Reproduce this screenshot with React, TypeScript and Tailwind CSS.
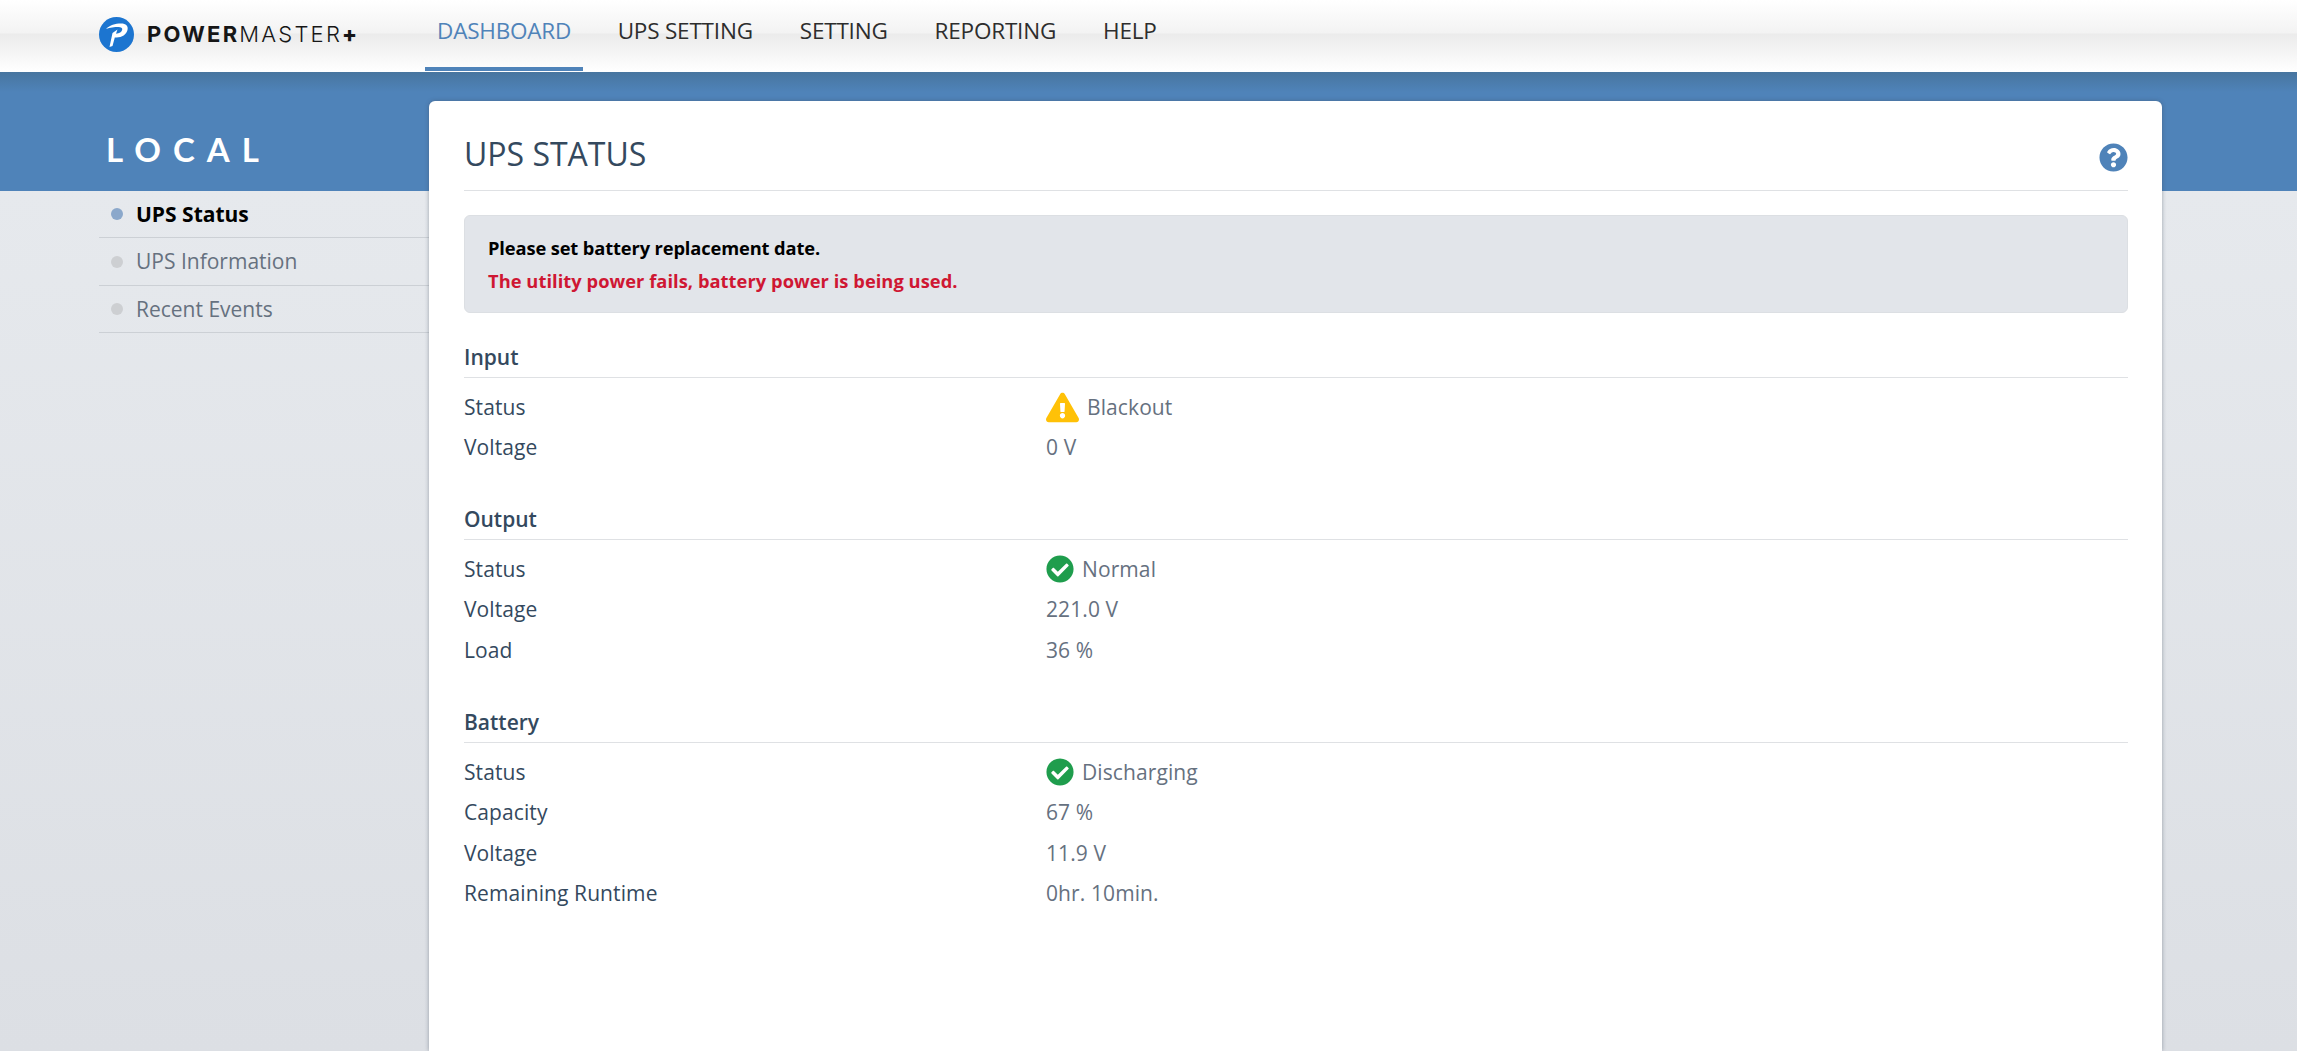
import { FaCheckCircle, FaExclamationTriangle, FaQuestionCircle } from "react-icons/fa";

const nav = ["DASHBOARD", "UPS SETTING", "SETTING", "REPORTING", "HELP"];
const side = ["UPS Status", "UPS Information", "Recent Events"];

type Row = { label: string; value: string; icon?: "warn" | "ok" };

const sections: { title: string; rows: Row[] }[] = [
  {
    title: "Input",
    rows: [
      { label: "Status", value: "Blackout", icon: "warn" },
      { label: "Voltage", value: "0 V" },
    ],
  },
  {
    title: "Output",
    rows: [
      { label: "Status", value: "Normal", icon: "ok" },
      { label: "Voltage", value: "221.0 V" },
      { label: "Load", value: "36 %" },
    ],
  },
  {
    title: "Battery",
    rows: [
      { label: "Status", value: "Discharging", icon: "ok" },
      { label: "Capacity", value: "67 %" },
      { label: "Voltage", value: "11.9 V" },
      { label: "Remaining Runtime", value: "0hr. 10min." },
    ],
  },
];

function Logo() {
  return (
    <div className="flex items-center gap-[13px]">
      <svg width="35" height="35" viewBox="0 0 35 35">
        <circle cx="17.5" cy="17.5" r="17.5" fill="#1c75d0" />
        <path
          d="M7 12C11 8 16 6.5 22 6.5C27 6.5 29.5 9 28.5 13C27.5 17.5 23 20.5 17.5 20.5L15.8 20.5L13.5 29L10.5 30L13.5 16L18.5 12.5L17 16.8C20.5 16.5 22.8 15 23.2 12.8C23.6 10.8 22 10 19.5 10C15.5 10 11 10.5 7 12Z"
          fill="#fff"
        />
      </svg>
      <span className="text-[22px] leading-none tracking-[2.2px] text-[#161616] font-['Inter',sans-serif]">
        <span className="font-bold">POWER</span>
        <span className="font-light">MASTER</span>
        <span className="font-extrabold">+</span>
      </span>
    </div>
  );
}

function StatusIcon({ kind }: { kind: "warn" | "ok" }) {
  if (kind === "warn") return <FaExclamationTriangle className="mr-[8px] text-[33px] text-[#ffc107]" />;
  return <FaCheckCircle className="mr-[8px] text-[28px] text-[#1f9d4d]" />;
}

export default function App() {
  return (
    <div className="flex h-screen flex-col overflow-hidden font-['Open_Sans',sans-serif]">
      <header className="flex h-[72px] shrink-0 bg-[linear-gradient(#ffffff_0px,#f3f3f3_33px,#ebebeb_34px,#ffffff_72px)] pl-[99px]">
        <div className="flex w-[326px] items-center pb-[4px]">
          <Logo />
        </div>
        <nav className="flex h-full text-[22.5px] leading-none tracking-[-0.2px] text-[#2d2d2d]">
          {nav.map((n, i) => (
            <a
              key={n}
              className={
                i === 0
                  ? "mr-[11px] flex h-[71px] items-center border-b-[4px] border-[#4f83b9] px-[12px] pb-[4px] text-[#4f83b9]"
                  : "flex h-[71px] items-center px-[23.5px] pb-[8px]"
              }
            >
              {n}
            </a>
          ))}
        </nav>
      </header>

      <main className="flex min-h-0 flex-1 bg-[linear-gradient(#47759f_0px,#4f83b9_20px,#4f83b9_119px,#e6e9ed_119px,#dcdfe4_100%)] pl-[99px] pr-[135px]">
        <aside className="w-[330px] shrink-0">
          <div className="flex h-[119px] items-center pt-[35px] pl-[7px] text-[33px] font-bold leading-none tracking-[12px] text-white font-['Lato',sans-serif]">
            LOCAL
          </div>
          <ul className="text-[21px] leading-none">
            {side.map((s, i) => (
              <li
                key={s}
                className={
                  i === 0
                    ? "flex h-[47px] items-center gap-[13px] border-b border-[#ccd0d5] pl-[12px] font-bold text-black"
                    : "flex h-[47.5px] items-center gap-[13px] border-b border-[#ccd0d5] pl-[12px] pt-[1px] text-[#66717f]"
                }
              >
                <span className={i === 0 ? "size-[12px] rounded-full bg-[#8ba8cb]" : "size-[12px] rounded-full bg-[#cdcfd2]"} />
                {s}
              </li>
            ))}
          </ul>
        </aside>

        <section className="mt-[29px] flex-1 rounded-t-[6px] bg-white pl-[35px] pr-[34px] shadow-[0_0_4px_rgba(60,70,90,0.45)]">
          <div className="flex h-[90px] items-center justify-between border-b border-[#dfe1e4] pt-[17px] text-[#34495e]">
            <h1 className="text-[32px] font-normal leading-none">UPS STATUS</h1>
            <FaQuestionCircle className="mt-[6px] text-[29px] text-[#4f83b9]" />
          </div>

          <div className="mt-[24px] flex h-[98px] flex-col justify-center gap-[9px] rounded-[6px] border border-[#dcdfe3] bg-[#e2e5ea] px-[23px] text-[18.3px] font-bold leading-[24px]">
            <p className="tracking-[-0.12px] text-black">Please set battery replacement date.</p>
            <p className="tracking-[0.05px] text-[#cf1733]">The utility power fails, battery power is being used.</p>
          </div>

          <div className="mt-[28px] flex flex-col gap-[35px]">
            {sections.map((sec) => (
              <div key={sec.title}>
                <h2 className="flex h-[37px] items-center border-b border-[#dfe1e4] pb-[3px] text-[21px] font-semibold leading-none text-[#34495e]">
                  {sec.title}
                </h2>
                <dl className="pt-[9px] text-[21px] tracking-[0.1px]">
                  {sec.rows.map((r) => (
                    <div key={sec.title + r.label + r.value} className="flex h-[40.6px] items-center">
                      <dt className="w-[582px] shrink-0 text-[#34495e]">{r.label}</dt>
                      <dd className="flex items-center text-[#66717f]">
                        {r.icon && <StatusIcon kind={r.icon} />}
                        {r.value}
                      </dd>
                    </div>
                  ))}
                </dl>
              </div>
            ))}
          </div>
        </section>
      </main>
    </div>
  );
}
